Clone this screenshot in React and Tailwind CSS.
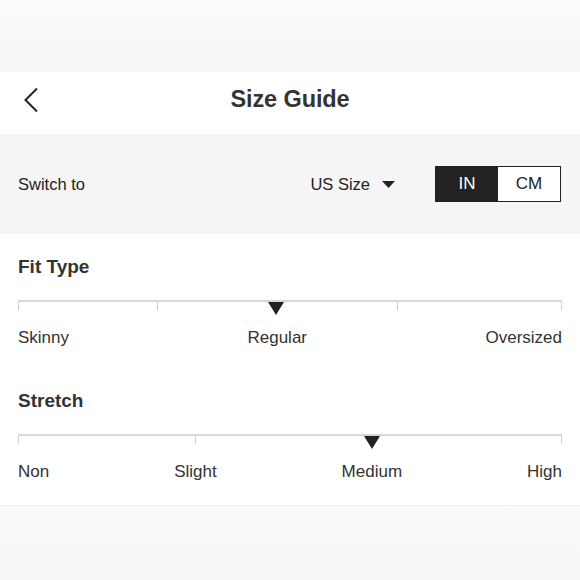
import React from "react";

const fitType = {
  title: "Fit Type",
  labels: ["Skinny", "Regular", "Oversized"],
  ticks: [25.6, 69.6],
  marker: 47.5,
};

const stretch = {
  title: "Stretch",
  labels: ["Non", "Slight", "Medium", "High"],
  ticks: [32.6],
  marker: 65,
};

function BackIcon() {
  return (
    <svg width="16" height="26" viewBox="0 0 16 26" fill="none" stroke="#222" strokeWidth="2">
      <polyline points="14,1.5 2.5,13 14,24.5" />
    </svg>
  );
}

function Caret() {
  return (
    <svg width="13" height="7" viewBox="0 0 13 7">
      <polygon points="0,0 13,0 6.5,7" fill="#222" />
    </svg>
  );
}

function Marker() {
  return (
    <svg width="16" height="13" viewBox="0 0 16 13">
      <polygon points="0,0 16,0 8,13" fill="#222" />
    </svg>
  );
}

function Scale({ data, first }) {
  return (
    <div className={first ? "" : "mt-[42px]"}>
      <h2 className="text-[19px] leading-[22px] font-bold text-[#333]">{data.title}</h2>
      <div className="relative mt-[22px] h-[16px] border-t-2 border-[#d8d8d8]">
        <span className="absolute left-0 top-0 h-[8px] w-px bg-[#cfcfcf]" />
        <span className="absolute right-0 top-0 h-[8px] w-px bg-[#cfcfcf]" />
        {data.ticks.map((t) => (
          <span
            key={t}
            className="absolute top-0 h-[8px] w-px bg-[#cfcfcf]"
            style={{ left: t + "%" }}
          />
        ))}
        <span
          className="absolute top-0 -translate-x-1/2 leading-none flex"
          style={{ left: data.marker + "%" }}
        >
          <Marker />
        </span>
      </div>
      <div className="mt-[12px] flex justify-between text-[17px] leading-[20px] text-[#333]">
        {data.labels.map((l) => (
          <span key={l}>{l}</span>
        ))}
      </div>
    </div>
  );
}

export default function App() {
  return (
    <div
      className="min-h-[580px] bg-[#f9f9f9] flex flex-col"
      style={{ fontFamily: '"Liberation Sans", Arial, Helvetica, sans-serif' }}
    >
      <div className="h-[72px] bg-gradient-to-b from-[#fbfbfb] to-[#f6f6f6]" />

      <header className="relative h-[62px] pb-[6px] bg-white flex items-center justify-center">
        <button type="button" className="absolute left-[23px] top-[15px] flex">
          <BackIcon />
        </button>
        <h1 className="text-[23.5px] font-bold text-[#333] tracking-[-0.1px]">Size Guide</h1>
      </header>

      <div className="h-[100px] bg-[#f5f5f5] flex items-center pl-[18px] pr-[19px] text-[16.5px] text-[#222]">
        <span>Switch to</span>
        <div className="ml-auto flex items-center gap-[12px]">
          <span>US Size</span>
          <Caret />
        </div>
        <div className="ml-[40px] flex h-[36px] border border-[#222]">
          <div className="w-[62px] bg-[#222] text-white flex items-center justify-center text-[17px]">
            IN
          </div>
          <div className="w-[62px] bg-white text-[#222] flex items-center justify-center text-[17px]">
            CM
          </div>
        </div>
      </div>

      <section className="bg-white px-[18px] pt-[22px] pb-[23px] border-b border-[#eeeeee]">
        <Scale data={fitType} first />
        <Scale data={stretch} />
      </section>

      <div className="flex-1 bg-gradient-to-b from-[#fafafa] to-[#f7f7f7]" />
    </div>
  );
}
